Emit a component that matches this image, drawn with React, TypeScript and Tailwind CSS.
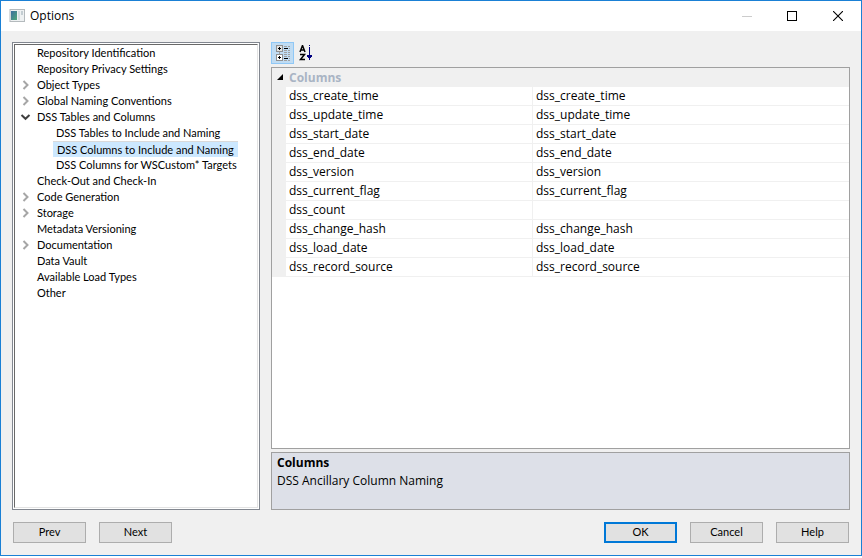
import React from 'react';
import clsx from 'clsx';

interface TreeItem {
  label: string;
  depth: number;
  state?: 'open' | 'closed';
  selected?: boolean;
}

const treeItems: TreeItem[] = [
  { label: 'Repository Identification', depth: 0 },
  { label: 'Repository Privacy Settings', depth: 0 },
  { label: 'Object Types', depth: 0, state: 'closed' },
  { label: 'Global Naming Conventions', depth: 0, state: 'closed' },
  { label: 'DSS Tables and Columns', depth: 0, state: 'open' },
  { label: 'DSS Tables to Include and Naming', depth: 1 },
  { label: 'DSS Columns to Include and Naming', depth: 1, selected: true },
  { label: 'DSS Columns for WSCustom* Targets', depth: 1 },
  { label: 'Check-Out and Check-In', depth: 0 },
  { label: 'Code Generation', depth: 0, state: 'closed' },
  { label: 'Storage', depth: 0, state: 'closed' },
  { label: 'Metadata Versioning', depth: 0 },
  { label: 'Documentation', depth: 0, state: 'closed' },
  { label: 'Data Vault', depth: 0 },
  { label: 'Available Load Types', depth: 0 },
  { label: 'Other', depth: 0 },
];

const columns = [
  { name: 'dss_create_time', value: 'dss_create_time' },
  { name: 'dss_update_time', value: 'dss_update_time' },
  { name: 'dss_start_date', value: 'dss_start_date' },
  { name: 'dss_end_date', value: 'dss_end_date' },
  { name: 'dss_version', value: 'dss_version' },
  { name: 'dss_current_flag', value: 'dss_current_flag' },
  { name: 'dss_count', value: '' },
  { name: 'dss_change_hash', value: 'dss_change_hash' },
  { name: 'dss_load_date', value: 'dss_load_date' },
  { name: 'dss_record_source', value: 'dss_record_source' },
];

function AppIcon() {
  return (
    <svg width="16" height="14" viewBox="0 0 16 14">
      <defs>
        <linearGradient id="screen" x1="0" y1="0" x2="1" y2="1">
          <stop offset="0" stopColor="#3c6ea0" />
          <stop offset="1" stopColor="#4fa878" />
        </linearGradient>
      </defs>
      <rect x="1" y="0.5" width="14.5" height="12" fill="#eef1f2" stroke="#b4babd" />
      <rect x="2" y="2" width="6" height="9" fill="url(#screen)" />
      <rect x="9" y="2" width="2" height="9" fill="#d5dde0" />
      <rect x="12" y="2" width="2" height="4" fill="#c3cdd2" />
    </svg>
  );
}

function Chevron({ open }: { open: boolean }) {
  return (
    <svg width="11" height="10" viewBox="0 0 11 10" fill="none">
      {open ? (
        <path d="M1.5 3l4 3.8 4-3.8" stroke="#404040" strokeWidth="2" />
      ) : (
        <path d="M3.5 1l4 4-4 4" stroke="#a6a6a6" strokeWidth="2" />
      )}
    </svg>
  );
}

function TitleBar() {
  return (
    <header className="flex h-[30px] shrink-0 items-center bg-white pl-2">
      <AppIcon />
      <h1 className="flex-1 pl-[5px] font-['Open_Sans',sans-serif] text-[12px]">Options</h1>
      <button type="button" aria-label="Minimize" className="flex h-full w-[44px] items-center justify-center">
        <svg width="10" height="10" viewBox="0 0 10 10" shapeRendering="crispEdges">
          <path d="M0 5.5h10" stroke="#cccccc" />
        </svg>
      </button>
      <button type="button" aria-label="Maximize" className="flex h-full w-[46px] items-center justify-center">
        <svg width="10" height="10" viewBox="0 0 10 10" shapeRendering="crispEdges">
          <rect x="0.5" y="0.5" width="9" height="9" fill="none" stroke="#000" />
        </svg>
      </button>
      <button type="button" aria-label="Close" className="flex h-full w-[46px] items-center justify-center">
        <svg width="10" height="10" viewBox="0 0 10 10">
          <path d="M0 0l10 10M10 0L0 10" stroke="#000" strokeWidth="1.1" />
        </svg>
      </button>
    </header>
  );
}

function OptionsTree() {
  return (
    <nav className="flex w-[248px] shrink-0 border border-[#828790] bg-white p-px">
      <ul className="flex-1 border border-t-[#696969] border-r-[#e3e3e3] border-b-[#e3e3e3] border-l-[#696969]">
        {treeItems.map((item) => (
          <li key={item.label} className={clsx('flex h-4 items-center', item.depth === 1 ? 'pl-[24px]' : 'pl-[5px]')}>
            <span className="flex w-[14px] shrink-0">
              {item.state && <Chevron open={item.state === 'open'} />}
            </span>
            <a
              href="#"
              className={clsx(
                'whitespace-nowrap',
                item.selected ? 'border-t border-[#d9d9d9] bg-[#cce8ff] px-1 leading-[15px]' : 'px-[3px] leading-4',
              )}
            >
              {item.label}
            </a>
          </li>
        ))}
      </ul>
    </nav>
  );
}

function Toolbar() {
  return (
    <div className="flex h-[25px] shrink-0 items-start">
      <button
        type="button"
        aria-label="Categorized"
        className="flex h-[22px] w-[23px] items-center justify-center border border-[#90c8f6] bg-[#c0dcf3]"
      >
        <svg width="17" height="16" viewBox="0 0 17 16" shapeRendering="crispEdges" fill="none">
          <path d="M5.5 7v2" stroke="#a0a0a0" />
          <rect x="2.5" y="0.5" width="6" height="6" fill="#e4e4e4" stroke="#909090" />
          <rect x="2.5" y="9.5" width="6" height="6" fill="#fff" stroke="#909090" />
          <path d="M4 3.5h3M5.5 2v3M4 12.5h3M5.5 11v3" stroke="#000" />
          <path d="M10 3.5h4M10 13.5h4" stroke="#000" />
          <path
            d="M10 1.5h3M14 1.5h2M15 3.5h1M10 5.5h3M14 5.5h2M10 7.5h3M14 7.5h2M10 9.5h3M14 9.5h2M10 11.5h3M14 11.5h2M15 13.5h1M10 15.5h3M14 15.5h2"
            stroke="#a0a0a0"
          />
        </svg>
      </button>
      <button type="button" aria-label="Alphabetical" className="flex h-[22px] w-[23px] items-center justify-center">
        <svg width="17" height="16" viewBox="0 0 17 16" fill="none">
          <path d="M3 7l2.5-6.5L8 7M3.5 5h4" stroke="#000" strokeWidth="1.5" />
          <path d="M3 9.5h4.5l-4 5H8" stroke="#000" strokeWidth="1.5" />
          <path d="M12 0h1v1h-1zM12 2h1v8h2v2h-1v1h-1v2h-1v-2h-1v-1h-1v-2h2z" fill="#000080" />
        </svg>
      </button>
    </div>
  );
}

function PropertyGrid() {
  return (
    <div className="flex-1 border border-[#a0a0a0] bg-white">
      <table className="w-full table-fixed border-separate border-spacing-0 text-left">
        <colgroup>
          <col className="w-[14px]" />
          <col className="w-[247px]" />
          <col />
        </colgroup>
        <thead>
          <tr className="h-[19px] bg-[#f0f0f0]">
            <th className="p-0">
              <svg width="14" height="10" viewBox="0 0 14 10">
                <path d="M11 1v6H5z" fill="#000" />
              </svg>
            </th>
            <th colSpan={2} scope="colgroup" className="p-0 pl-[3px] leading-[18px] font-bold text-[#a9b4c4]">
              Columns
            </th>
          </tr>
        </thead>
        <tbody>
          {columns.map((column) => (
            <tr key={column.name} className="h-[19px]">
              <td className="bg-[#f0f0f0] p-0" />
              <th scope="row" className="border-r border-b border-[#f0f0f0] p-0 pl-[3px] leading-[18px] font-normal">
                {column.name}
              </th>
              <td className="border-b border-[#f0f0f0] p-0 pl-[3px] leading-[18px]">{column.value}</td>
            </tr>
          ))}
        </tbody>
      </table>
    </div>
  );
}

function DialogButton({ label, primary = false }: { label: string; primary?: boolean }) {
  return (
    <button
      type="button"
      className={clsx(
        'flex h-[21px] w-[73px] items-center justify-center bg-[#e1e1e1]',
        primary ? 'border-2 border-[#0078d7]' : 'border border-[#adadad]',
      )}
    >
      {label}
    </button>
  );
}

export default function App() {
  return (
    <div className="flex min-h-screen flex-col bg-white pb-[2px]">
      <div className="flex flex-1 flex-col border border-[#1a80d5] bg-[#f0f0f0] font-['Lato',sans-serif] text-[11px] text-black">
        <TitleBar />
        <main className="flex flex-1 gap-[11px] pt-[11px] pr-[11px] pl-[11px]">
          <OptionsTree />
          <section className="flex min-w-0 flex-1 flex-col font-['Open_Sans',sans-serif] text-[12px]">
            <Toolbar />
            <PropertyGrid />
            <div className="mt-[3px] h-[58px] shrink-0 border border-[#a0a0a0] bg-[#dde0e8] px-[5px] pt-px leading-[18px]">
              <h2 className="font-bold">Columns</h2>
              <p>DSS Ancillary Column Naming</p>
            </div>
          </section>
        </main>
        <footer className="flex gap-[13px] pt-3 pr-3 pb-3 pl-3">
          <DialogButton label="Prev" />
          <DialogButton label="Next" />
          <div className="flex-1" />
          <DialogButton label="OK" primary />
          <DialogButton label="Cancel" />
          <DialogButton label="Help" />
        </footer>
      </div>
    </div>
  );
}
